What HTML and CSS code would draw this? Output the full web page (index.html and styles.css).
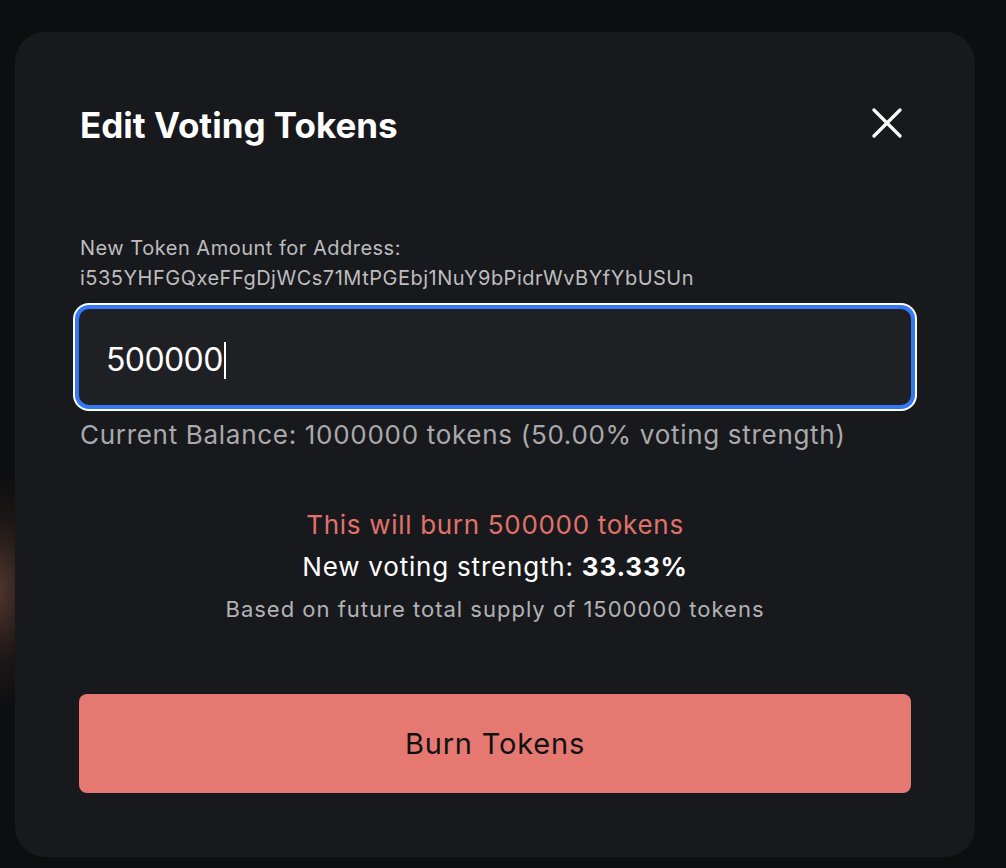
FILE: index.html
```html
<!DOCTYPE html>
<html lang="en">
<head>
<meta charset="utf-8">
<title>Edit Voting Tokens</title>
<link rel="stylesheet" href="styles.css">
</head>
<body>
<div class="backdrop">
  <div class="modal">
    <div class="modal-header">
      <h2 class="modal-title">Edit Voting Tokens</h2>
      <button class="close-btn" aria-label="Close">
        <svg width="30" height="30" viewBox="0 0 30 30" fill="none" stroke="#ffffff" stroke-width="3.2" stroke-linecap="round">
          <path d="M2 2 L28 28 M28 2 L2 28"/>
        </svg>
      </button>
    </div>
    <label class="field-label">New Token Amount for Address:<br>i535YHFGQxeFFgDjWCs71MtPGEbj1NuY9bPidrWvBYfYbUSUn</label>
    <div class="input-box"><span class="input-value">500000</span><span class="caret"></span></div>
    <div class="balance">Current Balance: 1000000 tokens (50.00% voting strength)</div>
    <div class="summary">
      <div class="burn-note">This will burn 500000 tokens</div>
      <div class="strength">New voting strength: <strong>33.33%</strong></div>
      <div class="supply">Based on future total supply of 1500000 tokens</div>
    </div>
    <button class="burn-btn">Burn Tokens</button>
  </div>
</div>
</body>
</html>
```

FILE: styles.css
```css
* { box-sizing: border-box; }

html, body {
  margin: 0;
  padding: 0;
}

body {
  width: 1006px;
  height: 868px;
  overflow: hidden;
  background:
    radial-gradient(ellipse 55px 120px at 0px 590px, rgba(95, 62, 52, 0.8), rgba(55, 38, 33, 0.35) 60%, rgba(13, 14, 16, 0) 100%),
    #0d0e10;
  font-family: Inter, "Noto Sans", "Liberation Sans", sans-serif;
  color: #ffffff;
}

.backdrop {
  padding: 32px 0 0 15px;
}

.modal {
  width: 960px;
  height: 825px;
  background: #18191d;
  border-radius: 30px;
  padding: 71px 64px 64px 64px;
  display: flex;
  flex-direction: column;
}

.modal-header {
  display: flex;
  align-items: center;
  justify-content: space-between;
  height: 40px;
}

.modal-title {
  margin: 0 0 0 1px;
  font-size: 35px;
  line-height: 40px;
  font-weight: 700;
  color: #ffffff;
  position: relative;
  top: 2px;
}

.close-btn {
  background: none;
  border: none;
  padding: 0;
  margin-right: 9px;
  width: 30px;
  height: 30px;
  display: flex;
  align-items: center;
  justify-content: center;
  cursor: pointer;
}

.field-label {
  display: block;
  margin-top: 90px;
  margin-left: 1px;
  font-size: 20px;
  line-height: 30px;
  letter-spacing: 0.5px;
  color: #bdbdbf;
}

.input-box {
  margin-top: 16px;
  height: 96px;
  background: #1f2024;
  border-radius: 10px;
  box-shadow: 0 0 0 4px #3478f6, 0 0 0 6px #ffffff;
  display: flex;
  align-items: center;
  padding: 6px 28px 0 27px;
}

.input-value {
  font-size: 32px;
  line-height: 40px;
  letter-spacing: -0.6px;
  color: #ffffff;
}

.caret {
  display: inline-block;
  width: 2px;
  height: 37px;
  background: #ffffff;
  margin-left: 1px;
}

.balance {
  margin-top: 12px;
  margin-left: 1px;
  font-size: 26px;
  line-height: 36px;
  letter-spacing: 0.7px;
  color: #a9a9ab;
}

.summary {
  margin-top: 54px;
  display: flex;
  flex-direction: column;
  align-items: center;
  text-align: center;
}

.burn-note {
  font-size: 26px;
  line-height: 36px;
  letter-spacing: 0.7px;
  color: #e1716b;
}

.strength {
  margin-top: 6px;
  font-size: 26px;
  line-height: 36px;
  letter-spacing: 0.8px;
  color: #ffffff;
}

.strength strong {
  font-weight: 700;
}

.supply {
  margin-top: 8px;
  font-size: 22px;
  line-height: 32px;
  letter-spacing: 1px;
  color: #b3b3b5;
}

.burn-btn {
  margin-top: 69px;
  height: 99px;
  width: 100%;
  border: none;
  border-radius: 8px;
  background: #e67872;
  color: #111111;
  font-family: Inter, "Noto Sans", "Liberation Sans", sans-serif;
  font-size: 29px;
  letter-spacing: 0.8px;
  font-weight: 400;
  cursor: pointer;
}
```
